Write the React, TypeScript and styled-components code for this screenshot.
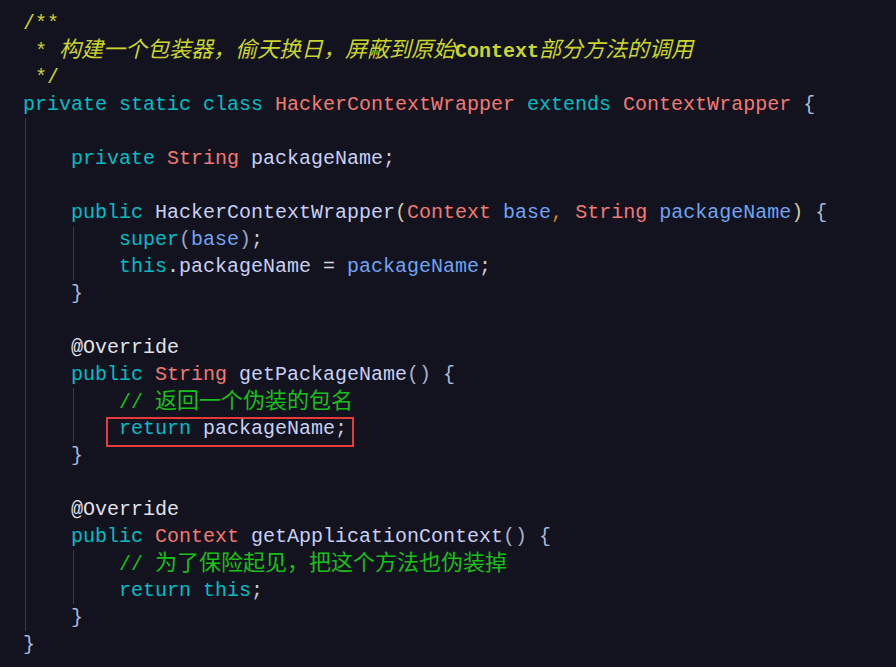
import React from "react";
import styled, { createGlobalStyle } from "styled-components";

const Global = createGlobalStyle`
  html, body { margin: 0; padding: 0; background: #13121f; }
  body { overflow: hidden; }
`;

const Editor = styled.div`
  width: 896px;
  height: 667px;
  box-sizing: border-box;
  background: #13121f;
  padding: 10px 0 0 23px;
  font-family: "Liberation Mono", "DejaVu Sans Mono", monospace;
  font-size: 20px;
  color: #c8d0f4;
`;

const Line = styled.div`
  height: 27px;
  line-height: 27px;
  white-space: pre;
`;

const Block = styled.div`
  margin-left: 2px;
  border-left: 1px solid #3b3a4a;
  padding-left: 45px;
`;

const Kw = styled.span`color: #00bec6;`;
const Type = styled.span`color: #f27a72;`;
const Ident = styled.span`color: #c8d0f4;`;
const Param = styled.span`color: #6ea4f2;`;
const Punc = styled.span<{ $c?: string }>`color: ${(p) => p.$c || "#c8cad8"};`;
const Annot = styled.span`color: #e2e2ea;`;
const DocComment = styled.span`color: #c9d52b;`;
const DocWord = styled.span`font-weight: bold;`;
const LineComment = styled.span`color: #19bf19;`;
const Cjk = styled.span<{ $italic?: boolean }>`
  font-family: "Noto Sans CJK SC", sans-serif;
  font-size: 22px;
  line-height: 20px;
  font-style: ${(p) => (p.$italic ? "italic" : "normal")};
`;

const Highlight = styled.span`
  position: relative;
  display: inline-block;
  height: 27px;
  &::after {
    content: "";
    position: absolute;
    left: -13px;
    right: -7px;
    top: 2px;
    bottom: -5px;
    border: 2px solid #e63a3a;
  }
`;

const brace = "#a9b9d9";
const paren = "#d8c9a0";

export default function App() {
  return (
    <>
      <Global />
      <Editor>
        <Line><DocComment>/**</DocComment></Line>
        <Line>
          <DocComment>
            {" * "}
            <Cjk $italic>构建一个包装器，偷天换日，屏蔽到原始</Cjk>
            <DocWord>Context</DocWord>
            <Cjk $italic>部分方法的调用</Cjk>
          </DocComment>
        </Line>
        <Line><DocComment>{" */"}</DocComment></Line>
        <Line>
          <Kw>private static class </Kw>
          <Type>HackerContextWrapper </Type>
          <Kw>extends </Kw>
          <Type>ContextWrapper </Type>
          <Punc $c={brace}>{"{"}</Punc>
        </Line>
        <Block>
          <Line> </Line>
          <Line>
            <Kw>private </Kw>
            <Type>String </Type>
            <Ident>packageName</Ident>
            <Punc>;</Punc>
          </Line>
          <Line> </Line>
          <Line>
            <Kw>public </Kw>
            <Ident>HackerContextWrapper</Ident>
            <Punc $c={paren}>(</Punc>
            <Type>Context </Type>
            <Param>base</Param>
            <Punc $c="#d4822e">, </Punc>
            <Type>String </Type>
            <Param>packageName</Param>
            <Punc $c={paren}>) </Punc>
            <Punc $c={brace}>{"{"}</Punc>
          </Line>
          <Block>
            <Line>
              <Kw>super</Kw>
              <Punc $c="#9aa6c8">(</Punc>
              <Param>base</Param>
              <Punc $c="#9aa6c8">)</Punc>
              <Punc>;</Punc>
            </Line>
            <Line>
              <Kw>this</Kw>
              <Ident>.packageName </Ident>
              <Punc $c="#d8d8e0">= </Punc>
              <Param>packageName</Param>
              <Punc>;</Punc>
            </Line>
          </Block>
          <Line><Punc $c={brace}>{"}"}</Punc></Line>
          <Line> </Line>
          <Line><Annot>@Override</Annot></Line>
          <Line>
            <Kw>public </Kw>
            <Type>String </Type>
            <Ident>getPackageName</Ident>
            <Punc $c="#a8b0c8">() </Punc>
            <Punc $c={brace}>{"{"}</Punc>
          </Line>
          <Block>
            <Line>
              <LineComment>
                {"// "}
                <Cjk>返回一个伪装的包名</Cjk>
              </LineComment>
            </Line>
            <Line>
              <Highlight>
                <Kw>return </Kw>
                <Ident>packageName</Ident>
                <Punc>;</Punc>
              </Highlight>
            </Line>
          </Block>
          <Line><Punc $c={brace}>{"}"}</Punc></Line>
          <Line> </Line>
          <Line><Annot>@Override</Annot></Line>
          <Line>
            <Kw>public </Kw>
            <Type>Context </Type>
            <Ident>getApplicationContext</Ident>
            <Punc $c="#a8b0c8">() </Punc>
            <Punc $c={brace}>{"{"}</Punc>
          </Line>
          <Block>
            <Line>
              <LineComment>
                {"// "}
                <Cjk>为了保险起见，把这个方法也伪装掉</Cjk>
              </LineComment>
            </Line>
            <Line>
              <Kw>return this</Kw>
              <Punc>;</Punc>
            </Line>
          </Block>
          <Line><Punc $c={brace}>{"}"}</Punc></Line>
        </Block>
        <Line><Punc $c={brace}>{"}"}</Punc></Line>
      </Editor>
    </>
  );
}
